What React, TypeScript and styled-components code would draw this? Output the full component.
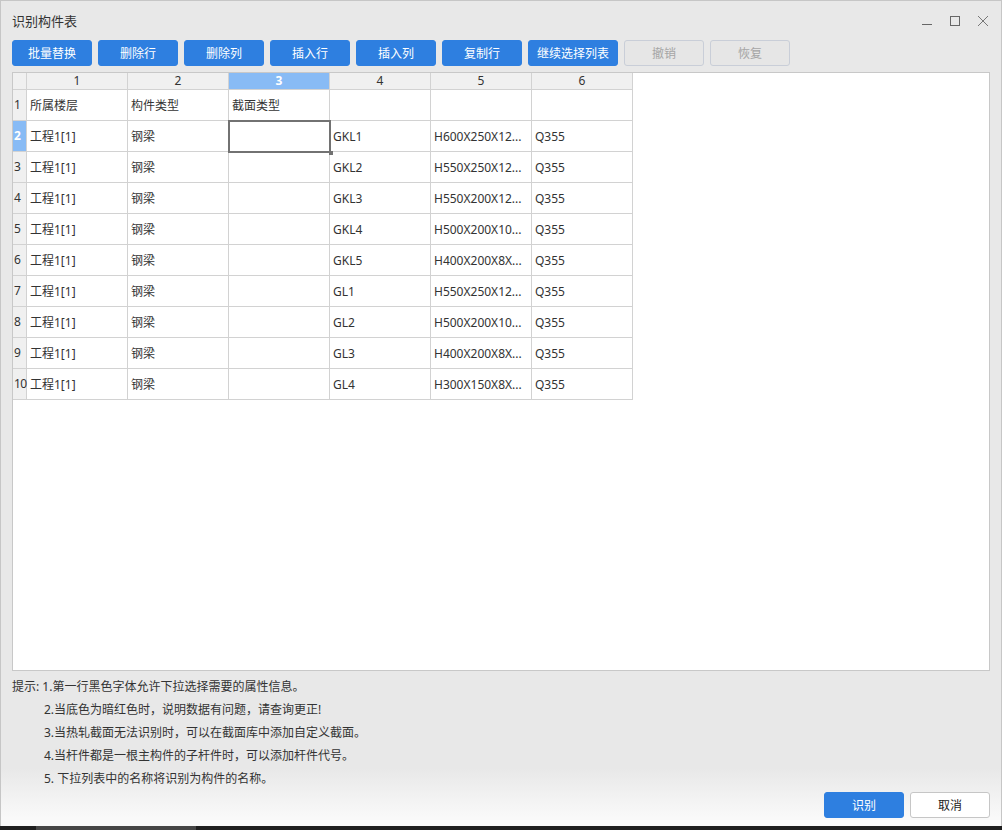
import styled, { createGlobalStyle } from 'styled-components';

const GlobalStyle = createGlobalStyle`
  html, body {
    margin: 0;
    padding: 0;
    background: #e8e8e8;
  }
  body {
    font-family: "Noto Sans", "Noto Sans CJK SC", sans-serif;
    font-size: 12px;
    color: #333;
  }
`;

const Page = styled.div`
  width: 1002px;
  height: 830px;
  display: flex;
  flex-direction: column;
  overflow: hidden;
`;

const Window = styled.div`
  height: 826px;
  box-sizing: border-box;
  border: 1px solid #c6c6c6;
  border-bottom: none;
  background: linear-gradient(to bottom, #e8e8e8 0%, #e8e8e8 93%, #f9f9f9 99%);
  display: flex;
  flex-direction: column;
`;

const TitleBar = styled.div`
  height: 39px;
  display: flex;
  align-items: center;
  justify-content: space-between;
  padding-left: 11px;
  padding-right: 8px;
`;

const Title = styled.div`
  font-size: 13px;
  color: #333;
  margin-top: -1px;
`;

const Controls = styled.div`
  display: flex;
  align-items: center;
  gap: 8px;
`;

const ControlButton = styled.div`
  width: 20px;
  height: 20px;
  display: flex;
  align-items: center;
  justify-content: center;
  svg {
    display: block;
  }
`;

const Toolbar = styled.div`
  height: 26px;
  display: flex;
  gap: 6px;
  padding-left: 11px;
`;

const ToolButton = styled.div<{ $disabled?: boolean; $wide?: boolean }>`
  width: ${(p) => (p.$wide ? '88px' : '78px')};
  height: 24px;
  border-radius: 3px;
  display: flex;
  align-items: center;
  justify-content: center;
  font-size: 12px;
  background: ${(p) => (p.$disabled ? '#e6e6e6' : '#2e7fe0')};
  border: 1px solid ${(p) => (p.$disabled ? '#c9ced8' : '#2e7fe0')};
  color: ${(p) => (p.$disabled ? '#a5a5a5' : '#ffffff')};
`;

const GridBox = styled.div`
  margin: 6px 11px 0 11px;
  height: 599px;
  box-sizing: border-box;
  border: 1px solid #c8c8c8;
  background: #ffffff;
  overflow: hidden;
`;

const Table = styled.div`
  display: grid;
  grid-template-columns: 14px repeat(6, 101px);
  grid-template-rows: 17px repeat(10, 31px);
  width: max-content;
  padding: 0 4px 4px 0;
`;

const HeadCell = styled.div<{ $active?: boolean }>`
  box-sizing: border-box;
  border-right: 1px solid #d2d2d2;
  border-bottom: 1px solid #d2d2d2;
  background: ${(p) => (p.$active ? '#88bbf5' : '#f0f0f0')};
  color: ${(p) => (p.$active ? '#ffffff' : '#333')};
  font-weight: ${(p) => (p.$active ? 700 : 400)};
  display: flex;
  align-items: center;
  justify-content: center;
  font-size: 12px;
  line-height: 1;
`;

const RowHead = styled(HeadCell)`
  justify-content: flex-start;
  padding-left: 1px;
  letter-spacing: -0.5px;
`;

const Cell = styled.div`
  position: relative;
  box-sizing: border-box;
  border-right: 1px solid #d2d2d2;
  border-bottom: 1px solid #d2d2d2;
  display: flex;
  align-items: center;
  padding-left: 3px;
  font-size: 12px;
  color: #333;
  white-space: nowrap;
  overflow: visible;
`;

const CellText = styled.span`
  overflow: hidden;
  text-overflow: ellipsis;
  max-width: 96px;
`;

const Selection = styled.div`
  position: absolute;
  left: -1px;
  top: -1px;
  right: -2px;
  bottom: -2px;
  border: 2px solid #727272;
  pointer-events: none;
  z-index: 2;
  &::after {
    content: '';
    position: absolute;
    right: -4px;
    bottom: -4px;
    width: 4px;
    height: 4px;
    background: #727272;
  }
`;

const Hints = styled.div`
  margin-top: 4px;
  padding-left: 11px;
  display: flex;
  flex-direction: column;
  font-size: 12px;
  line-height: 23px;
  color: #333;
`;

const HintLine = styled.div<{ $indent?: boolean }>`
  padding-left: ${(p) => (p.$indent ? '32px' : '0')};
`;

const Footer = styled.div`
  margin-top: auto;
  margin-bottom: 8px;
  display: flex;
  justify-content: flex-end;
  gap: 6px;
  padding-right: 11px;
`;

const DialogButton = styled.div<{ $primary?: boolean }>`
  width: 78px;
  height: 24px;
  border-radius: 3px;
  display: flex;
  align-items: center;
  justify-content: center;
  font-size: 12px;
  background: ${(p) => (p.$primary ? '#2e7fe0' : '#ffffff')};
  border: 1px solid ${(p) => (p.$primary ? '#2e7fe0' : '#c6c6c6')};
  color: ${(p) => (p.$primary ? '#ffffff' : '#222')};
`;

const TaskStrip = styled.div`
  height: 4px;
  background: #1e1e1e;
  display: flex;
`;

const TaskSegment = styled.div`
  margin-left: 36px;
  width: 160px;
  background: #454545;
`;

const tools = ['批量替换', '删除行', '删除列', '插入行', '插入列', '复制行', '继续选择列表', '撤销', '恢复'];

const headerRow = ['所属楼层', '构件类型', '截面类型', '', '', ''];

const rows: string[][] = [
  ['GKL1', 'H600X250X12...'],
  ['GKL2', 'H550X250X12...'],
  ['GKL3', 'H550X200X12...'],
  ['GKL4', 'H500X200X10...'],
  ['GKL5', 'H400X200X8X...'],
  ['GL1', 'H550X250X12...'],
  ['GL2', 'H500X200X10...'],
  ['GL3', 'H400X200X8X...'],
  ['GL4', 'H300X150X8X...'],
];

const hints = [
  '提示: 1.第一行黑色字体允许下拉选择需要的属性信息。',
  '2.当底色为暗红色时，说明数据有问题，请查询更正!',
  '3.当热轧截面无法识别时，可以在截面库中添加自定义截面。',
  '4.当杆件都是一根主构件的子杆件时，可以添加杆件代号。',
  '5. 下拉列表中的名称将识别为构件的名称。',
];

export default function App() {
  return (
    <Page>
      <GlobalStyle />
      <Window>
        <TitleBar>
          <Title>识别构件表</Title>
          <Controls>
            <ControlButton>
              <svg width="12" height="12" viewBox="0 0 12 12">
                <line x1="1" y1="9.5" x2="11" y2="9.5" stroke="#666" strokeWidth="1" />
              </svg>
            </ControlButton>
            <ControlButton>
              <svg width="12" height="12" viewBox="0 0 12 12">
                <rect x="1.5" y="1.5" width="9" height="9" fill="none" stroke="#666" strokeWidth="1" />
              </svg>
            </ControlButton>
            <ControlButton>
              <svg width="12" height="12" viewBox="0 0 12 12">
                <path d="M1 1 L11 11 M11 1 L1 11" stroke="#777" strokeWidth="1" />
              </svg>
            </ControlButton>
          </Controls>
        </TitleBar>

        <Toolbar>
          {tools.map((t, i) => (
            <ToolButton key={t} $wide={t === '继续选择列表'} $disabled={i >= 7}>
              {t}
            </ToolButton>
          ))}
        </Toolbar>

        <GridBox>
          <Table>
            <HeadCell />
            {[1, 2, 3, 4, 5, 6].map((n) => (
              <HeadCell key={n} $active={n === 3}>
                {n}
              </HeadCell>
            ))}

            <RowHead>1</RowHead>
            {headerRow.map((h, i) => (
              <Cell key={i}>{h}</Cell>
            ))}

            {rows.map((r, i) => {
              const rowNo = i + 2;
              return [
                <RowHead key={`h${rowNo}`} $active={rowNo === 2}>
                  {rowNo}
                </RowHead>,
                <Cell key={`a${rowNo}`}>工程1[1]</Cell>,
                <Cell key={`b${rowNo}`}>钢梁</Cell>,
                <Cell key={`c${rowNo}`}>{rowNo === 2 && <Selection />}</Cell>,
                <Cell key={`d${rowNo}`}>{r[0]}</Cell>,
                <Cell key={`e${rowNo}`}>
                  <CellText>{r[1]}</CellText>
                </Cell>,
                <Cell key={`f${rowNo}`}>Q355</Cell>,
              ];
            })}
          </Table>
        </GridBox>

        <Hints>
          {hints.map((h, i) => (
            <HintLine key={i} $indent={i > 0}>
              {h}
            </HintLine>
          ))}
        </Hints>

        <Footer>
          <DialogButton $primary>识别</DialogButton>
          <DialogButton>取消</DialogButton>
        </Footer>
      </Window>
      <TaskStrip>
        <TaskSegment />
      </TaskStrip>
    </Page>
  );
}
